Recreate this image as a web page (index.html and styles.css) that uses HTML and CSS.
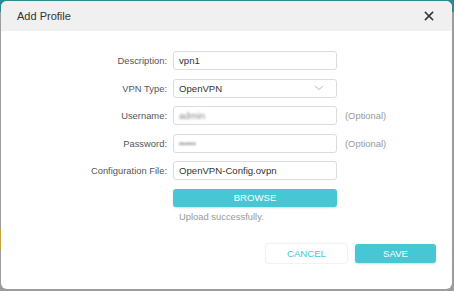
FILE: index.html
```html
<!DOCTYPE html>
<html>
<head>
<meta charset="utf-8">
<link rel="stylesheet" href="styles.css">
</head>
<body>
<div class="stage">
  <div class="dialog">
    <div class="header">
      <span class="title">Add Profile</span>
      <svg class="close" width="10" height="10" viewBox="0 0 10 10"><path d="M1.5 1.5 L8.5 8.5 M8.5 1.5 L1.5 8.5" stroke="#333" stroke-width="1.6" stroke-linecap="square"/></svg>
    </div>
    <div class="form">
      <label class="lbl">Description:</label>
      <div class="input"><span>vpn1</span></div>
      <span></span>

      <label class="lbl">VPN Type:</label>
      <div class="input select"><span>OpenVPN</span>
        <svg class="chev" width="10" height="6" viewBox="0 0 10 6"><path d="M1 1 L5 4.5 L9 1" fill="none" stroke="#bbb" stroke-width="1"/></svg>
      </div>
      <span></span>

      <label class="lbl">Username:</label>
      <div class="input"><span class="blur">admin</span></div>
      <span class="opt">(Optional)</span>

      <label class="lbl">Password:</label>
      <div class="input"><span class="blur">•••••</span></div>
      <span class="opt">(Optional)</span>

      <label class="lbl">Configuration File:</label>
      <div class="input"><span>OpenVPN-Config.ovpn</span></div>
      <span></span>

      <span></span>
      <div class="browse">BROWSE</div>
      <span></span>

      <span></span>
      <div class="status">Upload successfully.</div>
      <span></span>
    </div>
    <div class="footer">
      <button class="btn cancel">CANCEL</button>
      <button class="btn save">SAVE</button>
    </div>
  </div>
</div>
</body>
</html>
```
FILE: styles.css
```css
html, body {
  margin: 0;
  padding: 0;
}
body {
  width: 454px;
  height: 291px;
  background: linear-gradient(to bottom, #2c8a92 0, #2c8a92 12px, #9c9c9c 12px);
  font-family: "Liberation Sans", Arial, sans-serif;
  overflow: hidden;
}
.stage {
  padding: 1px 2px 2px 1px;
  background: linear-gradient(to bottom, transparent 0, transparent 228px, #c8a23a 228px, #c8a23a 250px, transparent 250px);
  background-size: 2px 100%;
  background-repeat: no-repeat;
}
.dialog {
  width: 451px;
  height: 288px;
  background: #fff;
  border-radius: 6px;
  overflow: hidden;
  display: flex;
  flex-direction: column;
}
.header {
  height: 30px;
  background: #f0f0f0;
  display: flex;
  align-items: center;
  justify-content: space-between;
  padding: 0 18px 0 16px;
  flex-shrink: 0;
}
.title {
  font-size: 11px;
  color: #333;
}
.close {
  display: block;
}
.form {
  display: grid;
  grid-template-columns: 166px 164px auto;
  grid-auto-rows: 19px;
  column-gap: 6px;
  row-gap: 8.5px;
  padding-top: 20px;
  font-size: 9.4px;
}
.form > :nth-child(3n+3) {
  margin-left: 2px;
}
.lbl {
  text-align: right;
  color: #555;
  align-self: center;
}
.input {
  box-sizing: border-box;
  border: 1px solid #dcdcdc;
  border-radius: 3px;
  display: flex;
  align-items: center;
  justify-content: space-between;
  padding: 0 6px 0 5px;
  color: #333;
  font-size: 9.6px;
}
.select .chev {
  margin-right: 6px;
}
.blur {
  filter: blur(1.2px);
  color: #888;
}
.opt {
  color: #999;
  align-self: center;
}
.browse {
  height: 18px;
  background: #47c6d6;
  border-radius: 3px;
  color: #fff;
  font-size: 9.6px;
  display: flex;
  align-items: center;
  justify-content: center;
  box-shadow: 0 1px 2px rgba(0,0,0,0.15);
}
.status {
  color: #999;
  align-self: start;
  padding-left: 6px;
  margin-top: -5px;
}
.footer {
  display: flex;
  justify-content: flex-end;
  gap: 8px;
  padding: 0 16px 0 0;
  margin-top: 9px;
}
.btn {
  width: 81px;
  height: 19px;
  border: none;
  border-radius: 3px;
  font-family: "Liberation Sans", Arial, sans-serif;
  font-size: 9.6px;
  padding: 0;
  display: flex;
  align-items: center;
  justify-content: center;
}
.cancel {
  background: #fff;
  color: #47c6d6;
  box-shadow: 0 0 2px rgba(0,0,0,0.2);
}
.save {
  background: #47c6d6;
  color: #fff;
  box-shadow: 0 1px 2px rgba(0,0,0,0.15);
}
```
